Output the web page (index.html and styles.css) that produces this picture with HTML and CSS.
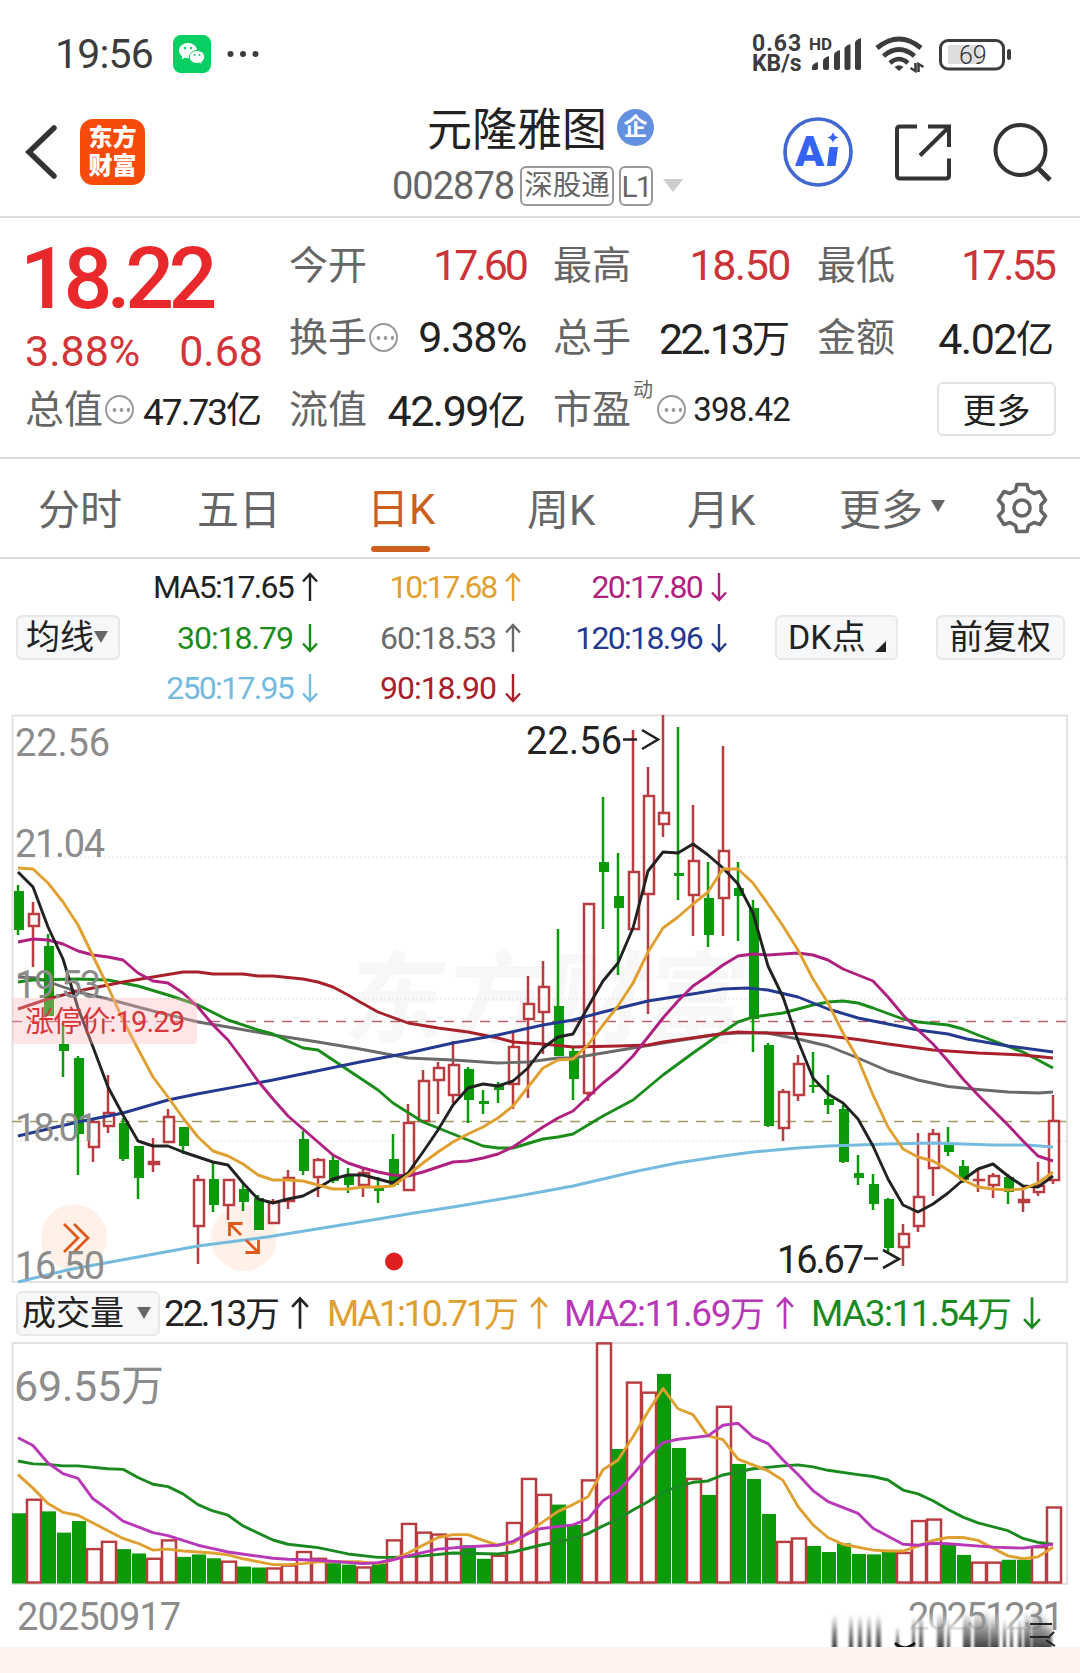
FILE: index.html
```html
<!DOCTYPE html>
<html lang="zh-CN">
<head>
  <meta charset="UTF-8">
  <title>元隆雅图 002878</title>
  <link rel="stylesheet" href="styles.css">
</head>
<body>
  <!-- Status bar -->
  <div class="status-bar">
    <span class="clock">19:56</span>
    <svg class="wechat" width="38" height="38" viewBox="0 0 38 38">
      <rect width="38" height="38" rx="8" fill="#07cf63"/>
      <path d="M15 8c-5 0-9 3.400-9 7.600 0 2.500 1.300 4.500 3.300 5.900l-.8 3 3.300-1.700c1 .3 2 .4 3.200.4 5 0 9-3.300 9-7.600S20 8 15 8z" fill="#fff"/>
      <path d="M24 15.500c-4.300 0-7.600 2.900-7.600 6.500s3.300 6.500 7.600 6.500c.9 0 1.800-.1 2.600-.4l2.800 1.500-.7-2.600c1.800-1.200 2.900-3 2.900-5 0-3.600-3.300-6.500-7.600-6.500z" fill="#fff" stroke="#07cf63"/>
      <g fill="#07cf63"><circle cx="12" cy="13" r="1.200"/><circle cx="18" cy="13" r="1.200"/><circle cx="21.500" cy="20" r="1"/><circle cx="26.500" cy="20" r="1"/></g>
    </svg>
    <svg class="dots" width="32" height="8" viewBox="0 0 32 8" fill="#3c3c3c"><circle cx="3.500" cy="4" r="3"/><circle cx="16" cy="4" r="3"/><circle cx="28.500" cy="4" r="3"/></svg>
    <div class="speed"><span>0.63</span><span>KB/s</span></div>
    <svg class="signal" width="54" height="36" viewBox="808 37 54 36" fill="#3c3c3c">
      <text x="809" y="51" class="hd">HD</text>
      <path d="M812 71v-3q0-3 6-5v6q0 2-2 2z"/>
      <path d="M823 62q0-3 6-5v12q0 2-2 2h-2q-2 0-2-2z"/>
      <path d="M834 56q0-3 6-5v18q0 2-2 2h-2q-2 0-2-2z"/>
      <path d="M844.500 50q0-3 6-5v24q0 2-2 2h-2q-2 0-2-2z"/>
      <path d="M855 44q0-3 6-5v30q0 2-2 2h-2q-2 0-2-2z"/>
    </svg>
    <svg class="wifi" width="50" height="38" viewBox="875 36 50 38" fill="none" stroke="#3c3c3c" stroke-width="5">
      <path d="M877 49q22-18 44 0"/>
      <path d="M883.500 57q15.500-13 31 0" stroke-width="4.800"/>
      <path d="M890 64q9-8 18 0" stroke-width="4.500"/>
      <path d="M894.500 68q4.500-3.500 9 0l-4.500 4z" fill="#3c3c3c" stroke="none"/>
      <path d="M915.500 64v8l-5-3M918.500 73v-8l5 3" stroke-width="2.600"/>
    </svg>
    <svg class="battery" width="74" height="34" viewBox="938 37 74 34">
      <rect x="948" y="45" width="33" height="19" fill="#dedede"/>
      <rect x="940.500" y="40.500" width="63" height="28.500" rx="7.500" fill="none" stroke="#3c3c3c" stroke-width="3"/>
      <rect x="1007" y="49" width="4" height="11" rx="2" fill="#3c3c3c"/>
      <text x="959" y="64" class="battery-level">69</text>
    </svg>
  </div>

  <!-- Header -->
  <div class="header">
    <svg class="back" width="34" height="56" viewBox="0 0 34 56"><path d="M30 4L5 28l25 24" fill="none" stroke="#333" stroke-width="5.500" stroke-linecap="round"/></svg>
    <div class="logo"><span>东方</span><span>财富</span></div>
    <div class="stock">
      <div class="stock-name">元隆雅图<span class="badge">企</span></div>
      <div class="stock-code"><span class="code">002878</span><span class="tag">深股通</span><span class="tag tag-l1">L1</span><i class="tri tri-light"></i></div>
    </div>
    <svg class="ai" width="72" height="72" viewBox="0 0 72 72">
      <circle cx="36" cy="36" r="33" fill="none" stroke="#4068d0" stroke-width="3.600"/>
      <text x="13" y="50" class="ai-text">A</text>
      <path d="M47.500 31h8.500l-2.500 19h-8.500z" fill="#3563f4"/>
      <path d="M51 16q1 4.500 5.500 5.500-4.500 1-5.500 5.500-1-4.500-5.500-5.500 4.500-1 5.500-5.500z" fill="#3563f4"/>
    </svg>
    <svg class="share" width="60" height="60" viewBox="893 121 60 60" fill="none" stroke="#333" stroke-width="4">
      <path d="M917 125.500h-17q-3 0-3 3v46q0 3 3 3h46q3 0 3-3v-17M928 125.500h21v20.500M949 126l-29 28.500"/>
    </svg>
    <svg class="search" width="62" height="62" viewBox="992 120 62 62" fill="none" stroke="#333" stroke-width="4">
      <circle cx="1020.500" cy="149" r="25"/><path d="M1038 167l12 12" stroke-width="5"/>
    </svg>
  </div>

  <!-- Quote -->
  <div class="quote">
    <div class="cell big">
      <div class="price">18.22</div>
      <div class="change"><span>3.88%</span><span>0.68</span></div>
    </div>
    <div class="cell"><label>今开</label><span class="val up tight">17.60</span></div>
    <div class="cell"><label>最高</label><span class="val up">18.50</span></div>
    <div class="cell"><label>最低</label><span class="val up tight">17.55</span></div>
    <div class="cell"><label>换手</label><i class="info"></i><span class="val">9.38%</span></div>
    <div class="cell"><label>总手</label><span class="val tight">22.13<b>万</b></span></div>
    <div class="cell"><label>金额</label><span class="val">4.02<b>亿</b></span></div>
    <div class="cell"><label>总值</label><i class="info"></i><span class="val mid">47.73<b>亿</b></span></div>
    <div class="cell"><label>流值</label><span class="val">42.99<b>亿</b></span></div>
    <div class="cell"><label>市盈<sup>动</sup></label><i class="info"></i><span class="val small">398.42</span></div>
    <div class="cell"><button class="more">更多</button></div>
  </div>

  <!-- Period tabs -->
  <div class="tabs">
    <span>分时</span>
    <span>五日</span>
    <span class="active">日K</span>
    <span>周K</span>
    <span>月K</span>
    <span>更多<i class="tri tri-tab"></i></span>
    <svg width="54" height="54" viewBox="-27 -27 54 54" fill="none" stroke="#666" stroke-width="3.600" stroke-linejoin="round">
      <path d="M-5-23.500H5L6.500-17.500L12-14.500L18-16.500L23.500-8L19-3V3L23.500 8L18 16.500L12 14.500L6.500 17.500L5 23.500H-5L-6.500 17.500L-12 14.500L-18 16.500L-23.500 8L-19 3V-3L-23.500-8L-18-16.500L-12-14.500L-6.500-17.500Z"/>
      <circle r="8"/>
    </svg>
  </div>

  <!-- Moving average legend -->
  <div class="legend">
    <button class="chip chip-ma">均线<i class="tri"></i></button>
    <div class="ma-list">
      <span class="ma5 ls2">MA5:17.65<svg class="arrow"><use href="#up"/></svg></span>
      <span class="ma10 ls3">10:17.68<svg class="arrow"><use href="#up"/></svg></span>
      <span class="ma20 ls2">20:17.80<svg class="arrow"><use href="#down"/></svg></span>
      <span class="ma30 ls1">30:18.79<svg class="arrow"><use href="#down"/></svg></span>
      <span class="ma60 ls1">60:18.53<svg class="arrow"><use href="#up"/></svg></span>
      <span class="ma120 ls2">120:18.96<svg class="arrow"><use href="#down"/></svg></span>
      <span class="ma250 ls2">250:17.95<svg class="arrow"><use href="#down"/></svg></span>
      <span class="ma90 ls1">90:18.90<svg class="arrow"><use href="#down"/></svg></span>
    </div>
    <button class="chip chip-dk">DK点<i class="corner"></i></button>
    <button class="chip chip-fq">前复权</button>
  </div>

  <!-- K line chart -->
  <svg class="kline" width="1080" height="570" viewBox="0 714 1080 570">
    <defs>
      <symbol id="up" viewBox="0 0 16 30"><path d="M8 29V2M1 9.500l7-7.500 7 7.500" fill="none" stroke="currentColor" stroke-width="2.400"/></symbol>
      <symbol id="down" viewBox="0 0 16 30"><path d="M8 1v27M1 20.500l7 7.500 7-7.500" fill="none" stroke="currentColor" stroke-width="2.400"/></symbol>
    </defs>
    <text class="watermark" transform="translate(342 1035) skewX(-8)" textLength="400">东方财富</text>
    <rect class="frame" x="12.500" y="715.500" width="1054.500" height="566.500"/>
    <path class="grid" d="M12 857H1067M12 999H1067M12 1141H1067"/>
    <path class="limit" d="M12 1021.500H1067"/>
    <path class="last" d="M12 1121.500H1067"/>
    <circle class="bubble" cx="74" cy="1237.500" r="33"/>
    <circle class="bubble" cx="244" cy="1238" r="33"/>
    <g id="candles"></g>
    <g class="lines">
      <polyline class="ma250" points="18,1282 67,1270 198,1246 267,1237 360,1222 408,1214 453,1207 513,1197 573,1186 633,1172 677,1163 723,1156 753,1152 798,1148 828,1146 888,1144 933,1143 978,1144.5 993,1145 1027,1145 1053,1147"/>
      <polyline class="ma60" points="18,977 37,978 78,992 108,999 153,1011 198,1022 228,1027 273,1035 318,1042 360,1049 408,1058 453,1060 483,1062 498,1063 528,1062 558,1058 573,1058 603,1053 633,1048 663,1043 720,1034 738,1033 767,1033 798,1039 828,1046 858,1058 888,1071 918,1080 948,1086.5 978,1089.5 1008,1092 1038,1093 1053,1092"/>
      <polyline class="ma30" points="18,982 33,980 78,979 108,980 138,986 168,995 198,1005 228,1020 258,1030 273,1034 303,1048 318,1050 360,1078 378,1090 393,1103 423,1122 453,1134 483,1146 498,1148 513,1148 543,1139 558,1137 573,1134 603,1116 618,1108 633,1100 663,1075 693,1053 723,1032 738,1022 753,1017 783,1013 798,1009 813,1005 828,1002 843,1001 858,1003 873,1008 903,1019 918,1022 948,1025 963,1029 978,1035 1023,1052 1053,1068"/>
      <polyline class="ma90" points="18,1009 48,999 78,991 123,982 153,977 183,972 198,972 213,974 228,974 243,974 258,976 273,976 303,979 318,982 333,987 348,995 360,1002 378,1012 408,1023 438,1028 468,1032 498,1038 513,1042 543,1044 573,1047 618,1046 648,1045 663,1042 720,1034 738,1032 768,1033 798,1033.5 828,1036 858,1039.5 888,1044 933,1050 978,1053 1023,1055 1053,1058"/>
      <polyline class="ma120" points="18,1136 78,1122 123,1113 168,1100 197,1094 273,1080 360,1062 408,1053 453,1043 498,1035 543,1025 573,1020 603,1012 648,1001 680,996 723,989 747,988 768,990 798,997 828,1009 858,1018 888,1024 918,1030 948,1034 967,1039 1008,1046 1053,1052"/>
      <polyline class="ma20" points="18,942 33,939 48,940 63,944 78,951 93,955 108,957 123,960 138,973 153,981 168,983 183,993 198,1007 213,1025 228,1040 243,1060 258,1081 273,1099 288,1116 303,1129 318,1142 333,1155 348,1163 363,1168 378,1172 393,1175 408,1176 423,1172 438,1167 453,1162 468,1161 483,1158 498,1154 513,1147 528,1137 543,1127 558,1118 573,1111 588,1097 603,1083 618,1071 633,1056 648,1037 663,1018 678,1001 693,986 708,976 723,965 738,956 753,954 768,955 783,954 798,953 813,955 828,960 843,969 858,975 873,981 888,997 903,1015 918,1030 933,1044 948,1061 963,1079 978,1095 993,1110 1008,1125 1023,1141 1038,1156 1053,1161"/>
      <polyline class="ma5" points="18,872 33,887 48,927 63,959 78,1008 93,1047 108,1087 123,1115 138,1141 153,1146 168,1146 183,1152 198,1157 213,1162 228,1165 243,1183 258,1199 273,1203 288,1199 303,1196 318,1188 333,1179 348,1175 363,1175 378,1179 393,1183 408,1173 423,1152 438,1130 453,1105 468,1088 483,1084 498,1086 513,1081 528,1068 543,1048 558,1037 573,1034 588,1007 603,981 618,963 633,928 648,871 663,852 678,853 693,844 708,855 723,868 738,884 753,913 768,966 783,997 798,1041 813,1078 828,1094 843,1103 858,1119 873,1146 888,1179 903,1205 918,1212 933,1204 948,1193 963,1180 978,1169 993,1164 1008,1176 1023,1186 1038,1187 1053,1176"/>
      <polyline class="ma10" points="18,868 33,869 48,883 63,902 78,925 93,956 108,987 123,1020 138,1049 153,1077 168,1097 183,1118 198,1137 213,1151 228,1156 243,1164 258,1175 273,1180 288,1180 303,1181 318,1185 333,1189 348,1189 363,1187 378,1187 393,1186 408,1175 423,1163 438,1152 453,1142 468,1134 483,1127 498,1118 513,1106 528,1087 543,1068 558,1060 573,1059 588,1045 603,1025 618,1006 633,983 648,952 663,928 678,917 693,904 708,892 723,869 738,869 753,883 768,904 783,926 798,950 813,979 828,1003 843,1033 858,1059 873,1095 888,1127 903,1149 918,1157 933,1161 948,1170 963,1180 978,1187 993,1189 1008,1190 1023,1189 1038,1183 1053,1172"/>
    </g>
    <rect class="limit-box" x="12" y="998" width="185" height="46" rx="4"/>
    <text class="limit-text" x="25" y="1032" textLength="160">涨停价:19.29</text>
    <path d="M64 1224l14 14-14 14M74 1224l14 14-14 14" fill="none" stroke="#dd5a1a" stroke-width="2.800"/>
    <path d="M241 1235l-11-11M229.500 1236v-12.500h13M246 1240l12 12M258.500 1240v12.500h-13" fill="none" stroke="#dd5a1a" stroke-width="2.800"/>
    <circle cx="394" cy="1261.500" r="9" fill="#e02020"/>
    <g class="axis">
      <text x="15" y="756" textLength="95">22.56</text>
      <text x="15" y="857" textLength="90">21.04</text>
      <text x="15" y="998" textLength="86">19.53</text>
      <text x="15" y="1141" textLength="83">18.01</text>
      <text x="15" y="1279" textLength="90">16.50</text>
    </g>
    <g class="mark">
      <text x="526" y="754" textLength="96">22.56</text>
      <path d="M623 739.500h14M642 730l16 9.500-16 9.500"/>
      <text x="777" y="1273" textLength="87">16.67</text>
      <path d="M864 1258.500h14M883 1250l16 9-16 9"/>
    </g>
  </svg>

  <!-- Volume legend -->
  <div class="vol-legend">
    <button class="chip chip-vol">成交量<i class="tri"></i></button>
    <span class="v0">22.13<b>万</b><svg class="arrow"><use href="#up"/></svg></span>
    <span class="v1">MA1:10.71<b>万</b><svg class="arrow"><use href="#up"/></svg></span>
    <span class="v2">MA2:11.69<b>万</b><svg class="arrow"><use href="#up"/></svg></span>
    <span class="v3">MA3:11.54<b>万</b><svg class="arrow"><use href="#down"/></svg></span>
  </div>

  <!-- Volume chart -->
  <svg class="volume" width="1080" height="305" viewBox="0 1342 1080 305">
    <defs>
      <linearGradient id="fade" x1="0" y1="0" x2="0" y2="1"><stop offset="0" stop-color="#fff" stop-opacity="0"/><stop offset=".5" stop-color="#fff" stop-opacity=".8"/><stop offset="1" stop-color="#fff"/></linearGradient>
      <linearGradient id="streak" x1="0" y1="0" x2="0" y2="1"><stop offset="0" stop-color="#555" stop-opacity="0"/><stop offset=".5" stop-color="#333" stop-opacity=".5"/><stop offset="1" stop-color="#222" stop-opacity=".85"/></linearGradient>
      <filter id="soft" x="-5%" width="110%"><feGaussianBlur stdDeviation="1.200 0"/></filter>
    </defs>
    <rect class="frame" x="12.500" y="1343" width="1054.500" height="241"/>
    <text class="vol-max" x="14" y="1401" textLength="150">69.55万</text>
    <g transform="translate(0 40.96) scale(1 .968)">
      <g id="volumes"></g>
      <g class="lines">
        <polyline class="v3" points="18,1467 33,1470 48,1470.5 63,1472 78,1472 108,1475 123,1475.6 138,1484 153,1491 168,1493.5 183,1501 198,1512 213,1518.6 228,1523 243,1534 273,1548.6 288,1553 318,1556.5 348,1563 378,1566.5 393,1566.5 423,1565 453,1562 498,1563 513,1561 540,1554 567,1548.6 588,1542 603,1534 618,1527 633,1517.6 648,1509 663,1499 678,1493.5 693,1489 708,1487.6 723,1481.4 753,1475 783,1472 798,1471 813,1473 828,1476.6 858,1481 873,1483 888,1486.6 903,1497 918,1501 933,1508 948,1517 963,1525 978,1531 1008,1539 1023,1547 1038,1551 1053,1553"/>
        <polyline class="v1" points="18,1481 33,1495 48,1511 63,1520 78,1523 93,1531 108,1539 123,1547 138,1552 153,1559 168,1558 183,1560 198,1561 213,1562 228,1564 243,1568 258,1571 273,1574 288,1574 303,1573 318,1571 358,1571 378,1573 393,1569 408,1562 423,1554 438,1546 453,1543 468,1543 483,1549 498,1554 513,1552 528,1541 540,1532 558,1519 573,1512 588,1504 603,1476 618,1466 633,1442 648,1416 663,1392 678,1413 693,1419 708,1441 723,1445 738,1465 768,1477 783,1487 798,1514 813,1533 828,1546 843,1553 873,1559 888,1560 903,1560 918,1555 933,1549 948,1546 963,1546 978,1549 993,1557 1008,1565 1023,1568 1038,1566 1053,1556"/>
        <polyline class="v2" points="18,1443 33,1451 48,1469 63,1480 78,1485 93,1506 108,1517 123,1529 153,1541 168,1544 198,1554 213,1557.5 228,1561 273,1567.5 288,1568.5 318,1569.5 363,1573 378,1572 393,1569 408,1565 438,1558 468,1555.5 498,1554 513,1550 528,1542 540,1537 573,1533 588,1527 603,1508 618,1498 633,1481 648,1462.5 663,1448 678,1444.5 708,1441 723,1430 738,1428 753,1442 768,1449 783,1466 798,1481 813,1497.5 828,1509 858,1521 873,1536.5 903,1553 918,1554 933,1552 948,1552.4 993,1556 1023,1557 1053,1553"/>
      </g>
    </g>
    <g class="dates">
      <text x="17" y="1630" textLength="164">20250917</text>
      <text x="908" y="1630" textLength="156">20251231</text>
    </g>
    <rect x="905" y="1612" width="147" height="35" fill="url(#fade)"/>
    <g id="streaks" fill="url(#streak)" filter="url(#soft)"></g>
    <path d="M895 1643q9 9 20 0" fill="none" stroke="#111" stroke-width="2.500"/>
    <path d="M1030 1624h22M1030 1637h18M1054 1632l-6 6M1046 1640l9 6" fill="none" stroke="#222" stroke-width="2"/>
  </svg>
  <div class="footer"></div>

  <script src="script.js"></script>
</body>
</html>
```

FILE: styles.css
```css
* {
  box-sizing: border-box;
}
body {
  margin: 0;
  width: 1080px;
  background: #fff;
  color: #222;
  font-family: Roboto, "Noto Sans CJK SC", sans-serif;
}
svg {
  display: block;
  flex: none;
}
b {
  font-weight: 400;
}
button {
  font-family: inherit;
  color: #222;
  padding: 0;
}
.tri {
  display: inline-block;
  border: 7px solid transparent;
  border-top: 12px solid #666;
  border-bottom: 0;
}

/* Status bar */
.status-bar {
  display: flex;
  align-items: center;
  height: 108px;
  padding: 0 68px 0 55px;
}
.clock {
  width: 118px;
  font-size: 41px;
  letter-spacing: -.8px;
  color: #3c3c3c;
}
.dots {
  margin-left: 16px;
}
.speed {
  display: flex;
  flex-direction: column;
  width: 56px;
  margin-left: auto;
  font-size: 23px;
  line-height: 20px;
  font-weight: 700;
  color: #3c3c3c;
}
.speed span:first-child {
  letter-spacing: 1px;
}
.hd {
  font-size: 17px;
  font-weight: 700;
}
.wifi {
  margin-left: 13px;
}
.battery {
  margin-left: 13px;
}
.battery-level {
  font-size: 25px;
  font-weight: 300;
  fill: #333;
}

/* Header */
.header {
  display: flex;
  align-items: center;
  height: 110px;
  padding: 0 24px 23px 24px;
  border-bottom: 2px solid #ddd;
}
.header > * {
  margin-top: 2px;
}
.logo {
  display: flex;
  flex-direction: column;
  justify-content: center;
  width: 65px;
  height: 66px;
  margin-left: 22px;
  border-radius: 13px;
  background: #f84a0a;
  color: #fff;
  font-size: 24px;
  line-height: 28px;
  font-weight: 900;
  text-align: center;
}
.stock {
  width: 300px;
  height: 108px;
  margin: 4px 0 0 247px;
}
.stock-name {
  display: flex;
  align-items: center;
  height: 56px;
  padding-left: 35px;
  font-size: 45px;
}
.badge {
  width: 37px;
  height: 37px;
  margin: 1px 0 0 10px;
  border-radius: 50%;
  background: #6490e2;
  color: #fff;
  font-size: 24px;
  line-height: 36px;
  font-weight: 700;
  text-align: center;
}
.stock-code {
  display: flex;
  align-items: center;
  height: 46px;
  margin-top: 8px;
  color: #666;
}
.code {
  width: 128px;
  font-size: 38px;
  letter-spacing: -1px;
}
.tag {
  flex: none;
  width: 94px;
  height: 40px;
  margin-right: 5px;
  border: 2px solid #999;
  border-radius: 6px;
  font-size: 28.500px;
  line-height: 35px;
  text-align: center;
  white-space: nowrap;
}
.tag-l1 {
  width: 34px;
  font-size: 30px;
  line-height: 37px;
  letter-spacing: -2px;
}
.tri-light {
  margin-left: 5px;
  border-width: 13px 10px 0;
  border-top-color: #ccc;
}
.ai {
  margin-left: 90px;
}
.ai-text {
  font-size: 43px;
  font-weight: 900;
  fill: #3563f4;
}
.share {
  margin-left: 39px;
}
.search {
  margin-left: 39px;
}

/* Quote */
.quote {
  display: grid;
  grid-template-columns: repeat(4, 237px);
  grid-auto-rows: 72px;
  column-gap: 27px;
  height: 241px;
  padding: 10px 25px 0;
  border-bottom: 2px solid #ddd;
}
.cell {
  display: flex;
  align-items: center;
  padding-top: 2px;
}
.cell label {
  position: relative;
  margin-top: -6px;
  font-size: 39px;
  color: #666;
}
.cell sup {
  position: absolute;
  left: 80px;
  top: 0;
  font-size: 20px;
  line-height: 24px;
}
.cell label:has(sup) + .info {
  margin-left: 26px;
}
.big {
  grid-row: span 2;
  flex-direction: column;
  align-items: stretch;
  padding: 0;
}
.price {
  height: 97px;
  margin-left: -5px;
  color: #e8282a;
  font-size: 86px;
  line-height: 101px;
  font-weight: 500;
  letter-spacing: -5.500px;
}
.change {
  display: flex;
  justify-content: space-between;
  margin-right: -1px;
  color: #d23438;
  font-size: 43px;
  line-height: 52px;
}
.val {
  margin-left: auto;
  font-size: 43px;
  letter-spacing: -1.5px;
  white-space: nowrap;
}
.val b {
  position: relative;
  top: -2px;
  font-size: 38px;
  letter-spacing: 0;
}
.up {
  color: #cc3338;
}
.tight {
  letter-spacing: -3px;
}
.mid {
  font-size: 37px;
  letter-spacing: -2px;
}
.mid b {
  font-size: 36px;
}
.small {
  font-size: 33px;
  letter-spacing: -.8px;
}
.info {
  width: 29px;
  height: 29px;
  margin-left: 2px;
  border: 2px solid #999;
  border-radius: 50%;
  background: radial-gradient(circle at 3.500px 3px, #999 1.600px, transparent 2.200px) 2px 10px / 7px 7px repeat-x content-box;
  background-clip: content-box;
  padding: 0 2px;
}
.more {
  width: 119px;
  height: 54px;
  margin-left: auto;
  margin-right: -2px;
  padding-bottom: 4px;
  border: 2px solid #e2e2e2;
  border-radius: 6px;
  background: #fff;
  font-size: 34px;
}

/* Period tabs */
.tabs {
  display: grid;
  grid-template-columns: 159px 171px 159px 160px 152px 156px 54px;
  align-items: center;
  height: 100px;
  padding-left: 38px;
  border-bottom: 2px solid #ddd;
  color: #666;
  font-size: 42px;
}
.tabs span {
  display: flex;
  align-items: center;
  height: 97px;
  padding-bottom: 4px;
}
.tri-tab {
  margin-left: 8px;
}
.tabs .active {
  flex-direction: column;
  align-items: flex-start;
  margin-left: -1px;
  padding-top: 8px;
  color: #cc5f1c;
  line-height: 84px;
}
.tabs .active::after {
  content: "";
  width: 59px;
  height: 6px;
  margin: -6px 0 0 4px;
  border-radius: 3px;
  background: #cc5f1c;
}

/* Moving average legend */
.legend {
  display: flex;
  align-items: center;
  height: 155px;
  padding: 1px 16px 0;
}
.chip {
  display: flex;
  align-items: center;
  height: 45px;
  border: 2px solid #e6e8ea;
  border-radius: 6px;
  background: #f6f7f9;
  font-size: 34px;
  line-height: 40px;
  white-space: nowrap;
}
.chip-ma {
  width: 104px;
  padding-left: 8px;
}
.chip-dk {
  width: 123px;
  margin-left: 48px;
  padding-left: 11px;
}
.chip-fq {
  width: 129px;
  margin-left: auto;
  margin-right: -1px;
  padding-left: 11px;
}
.corner {
  margin: 19px 0 0 9px;
  border-left: 11px solid transparent;
  border-bottom: 11px solid #222;
}
.ma-list {
  display: grid;
  grid-template-columns: 198px 203px 206px;
  grid-auto-rows: 50.500px;
  padding-top: 1px;
  font-size: 32px;
}
.ma-list span {
  display: flex;
  align-items: center;
  justify-content: flex-end;
}
.arrow {
  width: 16px;
  height: 30px;
  margin-left: 9px;
}
.ls1 {
  letter-spacing: -1px;
}
.ls2 {
  letter-spacing: -1.700px;
}
.ls3 {
  letter-spacing: -2.200px;
}
.ma5 { color: #222; stroke: #222; }
.ma10 { color: #e0a030; stroke: #e0a030; }
.ma20 { color: #b02080; stroke: #b02080; }
.ma30 { color: #1a8c1a; stroke: #1a8c1a; }
.ma60 { color: #6a6a6a; stroke: #6a6a6a; }
.ma90 { color: #a8202a; stroke: #a8202a; }
.ma120 { color: #233a90; stroke: #233a90; }
.ma250 { color: #74bbdf; stroke: #74bbdf; }
.legend span,
.vol-legend span {
  stroke: none;
}

/* Charts */
.lines {
  fill: none;
  stroke-width: 2.900px;
  stroke-linejoin: round;
}
.lines polyline {
  vector-effect: non-scaling-stroke;
}
.frame {
  fill: none;
  stroke: #e2e2e2;
  stroke-width: 2px;
}
.grid {
  stroke: #e2e2e2;
  stroke-dasharray: 2 2;
}
.limit,
.last {
  stroke: #b8646c;
  stroke-width: 1.500px;
  stroke-dasharray: 10 8;
}
.last {
  stroke: #a59a66;
}
.watermark {
  fill: #f7f7f7;
  font-size: 100px;
  font-weight: 700;
}
.bubble {
  fill: #fff0e8;
}
.red {
  fill: none;
  stroke: #b83c40;
  stroke-width: 2.500px;
}
.green {
  fill: #0a9a0a;
  stroke: none;
}
.green-wick {
  stroke: #0a9a0a;
  stroke-width: 2.500px;
}
.limit-box {
  fill: #ffb4b4;
  opacity: .35;
}
.limit-text {
  fill: #d8343a;
  font-size: 29px;
}
.axis text,
.dates text {
  fill: #8c8c8c;
  font-size: 38px;
}
.vol-max {
  fill: #8c8c8c;
  font-size: 43px;
}
.mark text {
  fill: #222;
  font-size: 38px;
}
.mark path {
  fill: none;
  stroke: #222;
  stroke-width: 2.600px;
}

/* Volume legend */
.vol-legend {
  display: flex;
  align-items: center;
  height: 58px;
  padding-left: 16px;
  font-size: 37px;
}
.vol-legend span {
  display: flex;
  align-items: center;
}
.vol-legend b {
  margin-top: -4px;
  font-size: 35px;
  letter-spacing: 0;
}
.vol-legend .arrow {
  width: 18px;
  height: 34px;
  margin-left: 11px;
}
.chip-vol {
  width: 144px;
  padding-left: 4px;
}
.chip-vol .tri {
  margin-left: 13px;
}
.v0 { width: 163px; margin-left: 4px; letter-spacing: -2.400px; }
.v1 { color: #e0a030; stroke: #e0a030; width: 237px; letter-spacing: -2.500px; }
.v2 { color: #b838b8; stroke: #b838b8; width: 247px; letter-spacing: -1.500px; }
.v3 { color: #1a8a20; stroke: #1a8a20; letter-spacing: -1.500px; }

.footer {
  height: 26px;
  background: #fff3ee;
}
```

FILE: script.js
```javascript
// one entry per trading day: [up?, high, low, body top, body bottom]
const candles = [
  [0,885,935,891,930],[1,902,967,914,926],[0,934,1016,946,1016],[0,1023,1077,1044,1051],[0,1056,1175,1058,1134],
  [1,1120,1162,1122,1147],[1,1075,1133,1113,1126],[0,1118,1161,1123,1159],[0,1146,1199,1146,1178],[1,1138,1172,1162,1164],
  [1,1109,1143,1117,1142],[0,1127,1154,1127,1146],[1,1175,1264,1180,1226],[0,1163,1212,1179,1205],[1,1179,1220,1180,1205],
  [0,1183,1211,1189,1202],[0,1195,1230,1198,1230],[1,1199,1223,1202,1223],[1,1170,1209,1178,1201],[0,1131,1175,1139,1171],
  [1,1158,1197,1160,1177],[0,1155,1183,1160,1181],[0,1168,1193,1176,1185],[1,1167,1197,1173,1185],[0,1177,1203,1188,1191],
  [0,1134,1186,1159,1185],[1,1104,1191,1123,1190],[1,1070,1121,1081,1121],[1,1062,1114,1068,1080],[1,1041,1103,1065,1095],
  [0,1067,1123,1069,1100],[0,1090,1114,1101,1104],[0,1082,1103,1085,1090],[1,1031,1109,1047,1084],[1,976,1098,1004,1019],
  [1,961,1054,987,1012],[0,929,1056,1006,1056],[0,1048,1100,1051,1079],[1,903,1101,904,1093],[0,797,929,862,872],
  [0,853,975,896,908],[1,730,929,872,929],[1,767,1014,796,894],[1,715,837,813,824],[0,727,900,873,876],
  [1,805,936,861,895],[0,862,947,898,935],[1,746,936,851,898],[0,862,941,888,896],[0,900,1052,908,1019],
  [0,1043,1127,1045,1126],[1,1089,1141,1092,1128],[1,1055,1101,1064,1095],[0,1052,1093,1085,1087],[0,1075,1114,1099,1105],
  [0,1105,1163,1109,1162],[0,1155,1185,1173,1178],[0,1174,1210,1184,1204],[0,1198,1252,1199,1248],[1,1224,1266,1234,1247],
  [1,1133,1232,1197,1226],[1,1129,1196,1134,1168],[0,1127,1156,1143,1152],[0,1160,1183,1166,1180],[1,1169,1192,1180,1180],
  [1,1173,1198,1176,1185],[0,1174,1204,1177,1192],[1,1185,1212,1200,1202],[1,1162,1196,1186,1192],[1,1095,1184,1121,1180]
];

// [up?, bar top]
const volumes = [
  [0,1521],[1,1506],[0,1519],[0,1541],[0,1529],[1,1557],[1,1549.5],[0,1558],[0,1562.5],[1,1567],
  [1,1548],[0,1566],[0,1563.5],[0,1567.5],[1,1570],[0,1576],[0,1577],[1,1577],[1,1574],[1,1560],
  [1,1567],[0,1572.5],[0,1574],[1,1576],[0,1573],[1,1548],[1,1531],[1,1540],[1,1542],[1,1546.5],
  [0,1554],[0,1568],[1,1564],[1,1530],[1,1484.5],[1,1501],[0,1512],[0,1533],[1,1486],[1,1344.5],
  [0,1454.6],[1,1385],[1,1395.4],[0,1377],[0,1453.5],[1,1484.5],[0,1502],[1,1410],[0,1470],[0,1485.6],
  [0,1521.7],[1,1549.6],[1,1546],[0,1554.8],[0,1561],[0,1552],[0,1563],[0,1563.4],[0,1561],[1,1561],
  [1,1528],[1,1526.5],[0,1553],[0,1564],[1,1571],[1,1571],[0,1569],[0,1569],[1,1555],[1,1514]
];

const dayX = i => 18 + i * 15;

document.getElementById('candles').innerHTML = candles.map(([up, high, low, top, bottom], i) => {
  const x = dayX(i);
  if (up) {
    return `<path class="red" d="M${x} ${high}V${top}M${x} ${bottom}V${low}"/>` +
      `<rect class="red" x="${x - 4}" y="${top}" width="10" height="${bottom - top || .1}"/>`;
  }
  return `<path class="green-wick" d="M${x} ${high}V${low}"/>` +
    `<rect class="green" x="${x - 4}" y="${top}" width="10" height="${bottom - top}"/>`;
}).join('');

document.getElementById('volumes').innerHTML = volumes.map(([up, top], i) => {
  const x = dayX(i);
  return up
    ? `<rect class="red" x="${x - 6}" y="${top + 1}" width="14" height="${1592.5 - top - 1}"/>`
    : `<rect class="green" x="${x - 6}" y="${top}" width="14" height="${1593.5 - top}"/>`;
}).join('');

// vertical streaks under the end date: [x, width, top]
const streaks = [
  [832,5,1614],[849,4,1614],[858,4,1614],[867,4,1614],[876,5,1614],[896,3,1626],[912,3,1616],[919,4,1612],
  [937,7,1612],[947,3,1618],[963,8,1612],[974,15,1610],[990,9,1614],[1003,3,1618],[1010,3,1618],[1018,4,1618],
  [1024,7,1612],[1032,10,1608],[1042,5,1614],[1047,5,1620]
];
document.getElementById('streaks').innerHTML = streaks
  .map(([x, w, y]) => `<rect x="${x}" y="${y}" width="${w}" height="${1647 - y}"/>`).join('');
```
